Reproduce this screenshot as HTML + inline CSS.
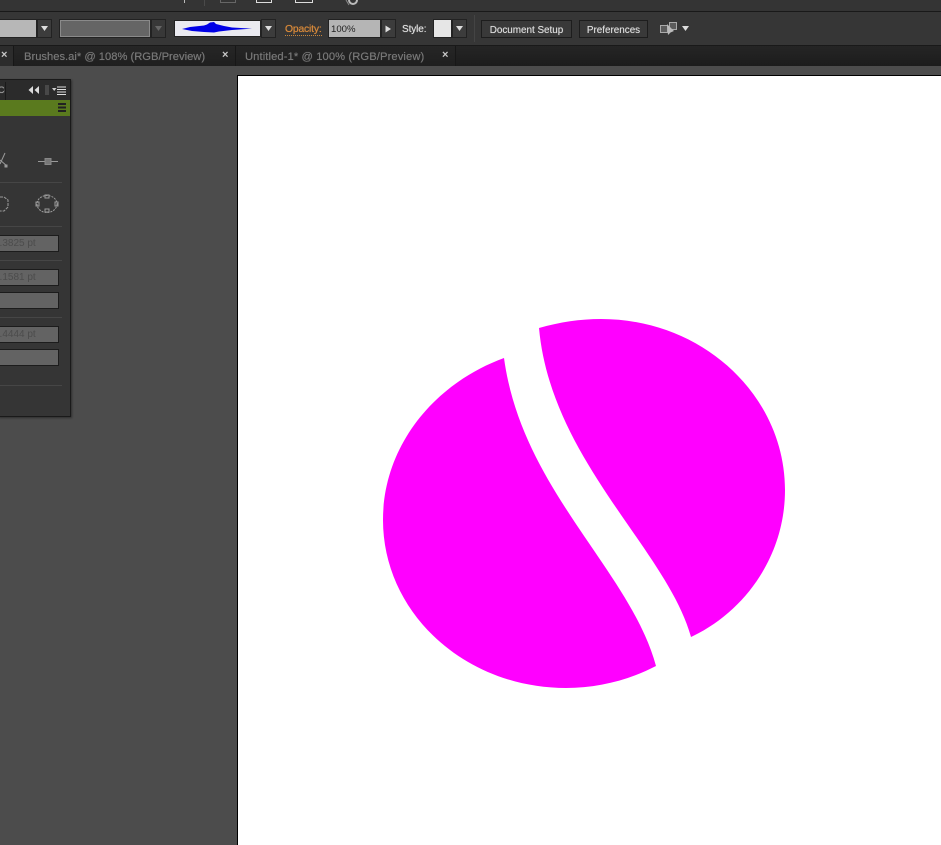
<!DOCTYPE html>
<html><head><meta charset="utf-8"><style>
html,body{margin:0;padding:0;background:#4c4c4c}
#r{position:relative;width:941px;height:845px;overflow:hidden;background:#4c4c4c;font-family:"Liberation Sans",sans-serif}
#r div{position:absolute;box-sizing:border-box}
.t{white-space:nowrap;font-size:10.5px;line-height:12px;text-shadow:0 0 .6px currentColor}
.tab{white-space:nowrap;font-size:11.2px;line-height:12px;color:#777;text-shadow:0 0 .5px #777}
.x{white-space:nowrap;color:#c8c8c8;font-size:11px;line-height:13px;font-weight:bold}
.dd{background:#3c3c3c;border:1px solid #222}
.btn{background:#393939;border:1px solid #1d1d1d;color:#ddd;font-size:9.9px;text-align:center;white-space:nowrap;text-shadow:0 0 .5px #ccc}
.f{background:#636363;border:1px solid #1c1c1c;left:-4px;width:63px;height:17px;color:#4c4c4c;font-size:10px;line-height:16px;text-indent:-3px;white-space:nowrap}
.s{height:1px;background:#464646;left:0;width:62px}
</style></head><body><div id="r">
<div style="left:0;top:0;width:941px;height:12px;background:#343434;border-bottom:1px solid #191919"></div>
<div style="left:0;top:12px;width:941px;height:34px;background:#363636;border-bottom:1px solid #191919"></div>
<div style="left:0;top:46px;width:941px;height:20px;background:linear-gradient(#252525,#1c1c1c)"></div>
<div style="left:184px;top:0;width:1px;height:3px;background:#bbb"></div>
<div style="left:204px;top:0;width:1px;height:6px;background:#4a4a4a"></div>
<div style="left:220px;top:0;width:16px;height:3px;border:1px solid #666;border-top:0"></div>
<div style="left:256px;top:0;width:16px;height:3px;border:1px solid #ddd;border-top:0"></div>
<div style="left:295px;top:0;width:18px;height:3px;border:1px solid #ddd;border-top:0"></div>
<svg style="position:absolute;left:345px;top:0" width="16" height="7"><circle cx="8" cy="0" r="4" fill="none" stroke="#bbb" stroke-width="2"/><path d="M1 0L4 5" stroke="#888"/></svg>

<div style="left:0;top:19px;width:37px;height:19px;background:#b7b7b7;border:1px solid #222;border-left:0"></div>
<div class="dd" style="left:37px;top:19px;width:15px;height:19px"></div>
<svg style="position:absolute;left:40px;top:26px" width="9" height="6"><path d="M1 0H8L4.500 5z" fill="#ddd"/></svg>
<div style="left:60px;top:20px;width:90px;height:17px;background:#656565;border:1px solid #8a8a8a;outline:1px solid #222"></div>
<div class="dd" style="left:151px;top:19px;width:15px;height:19px;background:#383838"></div>
<svg style="position:absolute;left:154px;top:26px" width="9" height="6"><path d="M1 0H8L4.500 5z" fill="#666"/></svg>

<div style="left:174px;top:20px;width:87px;height:17px;background:#eaeaf0;border:1px solid #222"></div>
<svg style="position:absolute;left:174px;top:20px" width="87" height="17"><path d="M8 9 L16 7 L30 5.500 L33 4.500 L36 2.500 L40 2 L42 4 L46 5 L50 6 L58 7.500 L78 8.600 L58 10 L45 11.500 L40 12.500 L30 12 L18 11z" fill="#0000e6"/></svg>
<div class="dd" style="left:261px;top:19px;width:15px;height:19px"></div>
<svg style="position:absolute;left:264px;top:26px" width="9" height="6"><path d="M1 0H8L4.500 5z" fill="#ddd"/></svg>

<div class="t" style="left:285px;top:24px;color:#d98a3a;font-size:10.4px;border-bottom:1px dotted #c8853a;line-height:11px;letter-spacing:-.2px">Opacity:</div>
<div style="left:328px;top:19px;width:53px;height:19px;background:#b5b5b5;border:1px solid #222;color:#222;font-size:9.6px;line-height:19px;padding-left:2px">100%</div>
<div class="dd" style="left:381px;top:19px;width:15px;height:19px"></div>
<svg style="position:absolute;left:385px;top:25px" width="7" height="8"><path d="M0.500 0.500V7.500L6 4z" fill="#ddd"/></svg>
<div class="t" style="left:402px;top:24px;color:#ddd;font-size:10px;letter-spacing:-.1px">Style:</div>
<div style="left:433px;top:19px;width:19px;height:19px;background:#e6e6e6;border:1px solid #222"></div>
<div class="dd" style="left:452px;top:19px;width:15px;height:19px"></div>
<svg style="position:absolute;left:455px;top:26px" width="9" height="6"><path d="M1 0H8L4.500 5z" fill="#ddd"/></svg>
<div style="left:474px;top:15px;width:1px;height:27px;background:#444"></div>
<div class="btn" style="left:481px;top:20px;width:91px;height:18px;line-height:19px">Document Setup</div>
<div class="btn" style="left:579px;top:20px;width:69px;height:18px;line-height:19px">Preferences</div>
<svg style="position:absolute;left:658px;top:20px" width="20" height="17">
<rect x="2.500" y="5.500" width="7" height="7" fill="#5c5c5c" stroke="#aaa"/><rect x="11.500" y="2.500" width="7" height="7" fill="#5c5c5c" stroke="#aaa"/><path d="M9 4L10 15L12.500 12.500L16 11z" fill="#bbb"/></svg>
<svg style="position:absolute;left:681px;top:26px" width="9" height="6"><path d="M1 0H8L4.500 5z" fill="#ddd"/></svg>

<div style="left:0;top:46px;width:14px;height:20px;background:#2c2c2c;border-right:1px solid #171717"></div>
<div style="left:14px;top:46px;width:222px;height:20px;background:linear-gradient(#262626,#1f1f1f);border-right:1px solid #171717"></div>
<div style="left:236px;top:46px;width:220px;height:20px;background:linear-gradient(#262626,#1f1f1f);border-right:1px solid #171717"></div>
<div class="x" style="left:1px;top:49px">×</div>
<div class="tab" style="left:24px;top:51px">Brushes.ai* @ 108% (RGB/Preview)</div>
<div class="x" style="left:222px;top:49px">×</div>
<div class="tab" style="left:245px;top:51px;letter-spacing:.1px">Untitled-1* @ 100% (RGB/Preview)</div>
<div class="x" style="left:442px;top:49px">×</div>

<div style="left:237px;top:75px;width:704px;height:770px;background:#fff;border-left:1px solid #000;border-top:1px solid #000"></div>
<svg style="position:absolute;left:0;top:0" width="941" height="845">
<path d="M539 328C560 322 580 319 601 319C703 319 785 396 785 490C785 555 746 611 691 637C667 550 551 460 539 328z" fill="#f0f"/>
<path d="M504 358C433 384 383 447 383 520C383 613 465 688 566 688C598 688 629 680 656 666C630 570 522 490 504 358z" fill="#f0f"/>
</svg>

<div style="left:-2px;top:79px;width:73px;height:338px;background:#353535;border:1px solid #1a1a1a;box-shadow:1px 1px 2px rgba(0,0,0,.4)"></div>
<div style="left:0;top:80px;width:70px;height:20px;background:#2b2b2b"></div>
<div style="left:0;top:82px;width:5px;height:18px;overflow:hidden"><div class="t" style="left:-2px;top:3px;color:#999;font-size:9px;line-height:11px">Co</div></div>
<div style="left:5px;top:82px;width:1px;height:18px;background:#1a1a1a"></div>
<svg style="position:absolute;left:28px;top:85px" width="40" height="11"><path d="M5 1V9L0.500 5zM11 1V9L6.500 5z" fill="#ddd"/><path d="M18 0V10M20 0V10" stroke="#666"/><path d="M24 3H28.500L26.200 6z" fill="#ccc"/><path d="M29 2H38M29 4.500H38M29 7H38M29 9.500H38" stroke="#ddd" stroke-width="1"/></svg>
<div style="left:0;top:100px;width:70px;height:16px;background:#5a7a1e"></div>
<svg style="position:absolute;left:58px;top:103px" width="9" height="10"><path d="M0 1H8M0 4.500H8M0 8H8" stroke="#222" stroke-width="2"/></svg>
<svg style="position:absolute;left:0;top:148px" width="62" height="70" fill="none" stroke="#9a9a9a">
<path d="M0 16L5 5M0 12L7 18"/><rect x="5" y="17" width="2" height="2" fill="#999"/>
<path d="M38 13.500H58"/><rect x="45" y="10.500" width="6" height="6" fill="#777" stroke="#888"/>
<path d="M0 49H4L8 52V59L4 63H0" stroke-dasharray="3 1"/>
<ellipse cx="47" cy="56" rx="10" ry="8.500" stroke-dasharray="2 1"/>
<rect x="45" y="47" width="4" height="3"/><rect x="45" y="61" width="4" height="3"/><rect x="36" y="54" width="3" height="4"/><rect x="55" y="54" width="3" height="4"/></svg>
<div class="s" style="top:182px"></div>
<div class="s" style="top:226px"></div>
<div class="f" style="top:235px">5.3825 pt</div>
<div class="s" style="top:260px"></div>
<div class="f" style="top:269px">9.1581 pt</div>
<div class="f" style="top:292px"></div>
<div class="s" style="top:317px"></div>
<div class="f" style="top:326px">5.4444 pt</div>
<div class="f" style="top:349px"></div>
<div class="s" style="top:385px"></div>
</div></body></html>
